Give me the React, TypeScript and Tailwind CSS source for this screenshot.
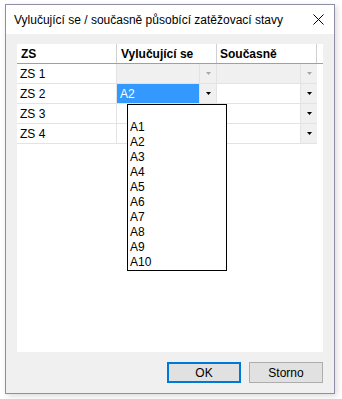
import React from "react";

const font = { fontFamily: '"Liberation Sans", Arial, sans-serif' };

function Arrow({ disabled }: { disabled?: boolean }) {
  return (
    <div className="w-[17px] h-full flex items-center justify-center bg-[#f0f0f0] border-l border-[#e3e3e3]">
      <svg width="5" height="3" viewBox="0 0 5 3">
        <path d="M0 0 H5 L2.5 3 Z" fill={disabled ? "#a8a8a8" : "#000"} />
      </svg>
    </div>
  );
}

function Cell({ children, combo, disabled, selected, last }: { children?: React.ReactNode; combo?: boolean; disabled?: boolean; selected?: boolean; last?: boolean }) {
  return (
    <div className={`w-[100px] h-[20px] flex border-b border-[#e3e3e3] ${last ? "" : "border-r"} ${disabled ? "bg-[#f0f0f0]" : "bg-white"}`}>
      <div className={`flex-1 flex items-center pl-[3px] ${selected ? "bg-[#3399ff] text-white" : ""}`}>{children}</div>
      {combo && <Arrow disabled={disabled} />}
    </div>
  );
}

export default function App() {
  const rows = ["ZS 1", "ZS 2", "ZS 3", "ZS 4"];
  const items = ["", "A1", "A2", "A3", "A4", "A5", "A6", "A7", "A8", "A9", "A10"];
  return (
    <div className="w-[342px] h-[399px] bg-white relative text-[12px] text-black" style={font}>
      <div className="absolute left-[5px] top-[4px] w-[330px] h-[390px] border border-[#8e8ea6] shadow-[2px_2px_6px_rgba(0,0,0,0.15)] flex flex-col bg-[#f0f0f0]">
        <div className="h-[29px] bg-white flex items-center pl-[8px] pr-[8px] justify-between shrink-0">
          <span className="text-[12px]">Vylučující se / současně působící zatěžovací stavy</span>
          <svg width="11" height="11" viewBox="0 0 11 11" className="mr-[2px]">
            <path d="M0.5 0.5 L10.5 10.5 M10.5 0.5 L0.5 10.5" stroke="#000" strokeWidth="1" />
          </svg>
        </div>
        <div className="flex-1 flex flex-col px-[11px] pt-[10px]">
          <div className="h-[308px] bg-white relative">
            <div className="flex h-[20px] border-b border-[#a0a0a0] font-bold">
              <div className="w-[100px] border-r border-[#d0d0d0] pl-[4px] flex items-center">ZS</div>
              <div className="w-[100px] border-r border-[#d0d0d0] pl-[4px] flex items-center">Vylučující se</div>
              <div className="w-[100px] border-r border-[#d0d0d0] pl-[3px] flex items-center">Současně</div>
            </div>
            {rows.map((r, i) => (
              <div key={r} className="flex">
                <Cell>{r}</Cell>
                <Cell combo disabled={i === 0} selected={i === 1}>{i === 1 ? "A2" : ""}</Cell>
                <Cell combo disabled={i === 0} last />
              </div>
            ))}
            <div className="absolute left-[110px] top-[60px] w-[100px] border border-black bg-white">
              {items.map((it, i) => (
                <div key={i} className="h-[15px] leading-[15px] pl-[2px] overflow-hidden">{it}</div>
              ))}
            </div>
          </div>
          <div className="flex justify-end gap-[8px] mt-[10px] mr-[0px]">
            <button className="w-[74px] h-[21px] bg-[#e1e1e1] border-2 border-[#0078d7] text-[12px]">OK</button>
            <button className="w-[74px] h-[21px] bg-[#e1e1e1] border border-[#adadad] text-[12px]">Storno</button>
          </div>
        </div>
      </div>
    </div>
  );
}
